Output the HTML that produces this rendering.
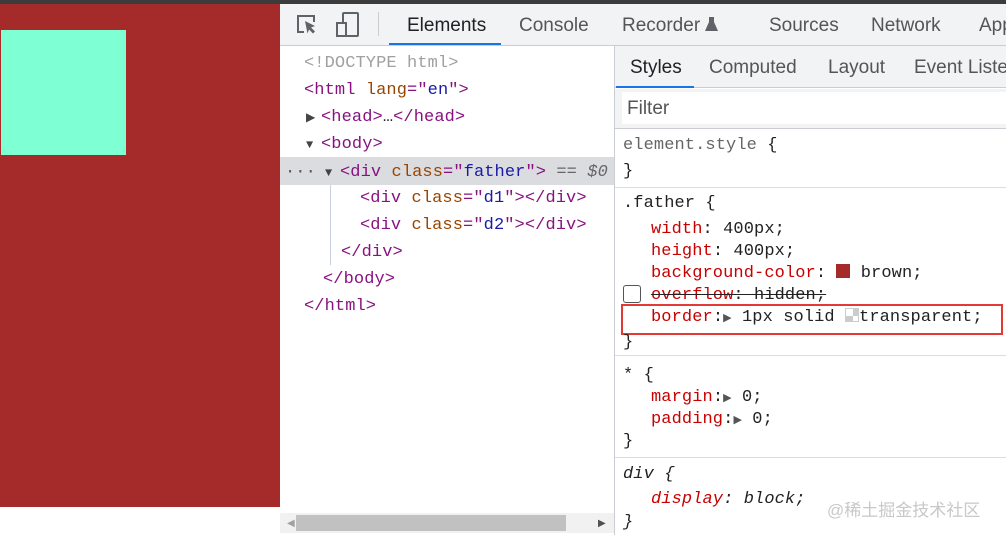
<!DOCTYPE html>
<html><head><style>
*{margin:0;padding:0;box-sizing:border-box}
body{width:1006px;height:535px;overflow:hidden;background:#fff;position:relative;font-family:"Liberation Sans",sans-serif}
.a{position:absolute;white-space:pre}
.m{font-family:"Liberation Mono",monospace;font-size:17px;line-height:22px;color:#222;margin-top:2px;letter-spacing:0.1px}
.t{color:#881280}.n{color:#994500}.v{color:#1a1aa6}.g{color:#a0a0a0}.p{color:#c80000}
.tab{font-size:19px;color:#555;line-height:22px}
.tri{font-size:12px;color:#444;display:inline-block;width:18px}
</style></head><body>
<div class="a" style="left:0;top:0;width:1006px;height:4px;background:#3c3c3c"></div>
<div class="a" style="left:0;top:4px;width:280px;height:503px;background:#a52a2a"></div>
<div class="a" style="left:1px;top:30px;width:125px;height:125px;background:#7fffd4"></div>
<div class="a" style="left:280px;top:4px;width:726px;height:42px;background:#f1f3f4;border-bottom:1px solid #cacdd1"></div>
<svg class="a" style="left:295px;top:12px" width="24" height="26" viewBox="0 0 24 26"><path d="M9 20H3V4h16v6" fill="none" stroke="#5f6368" stroke-width="2"/><path d="M10 9l10 5-4 1.5 4 4-2 2-4-4-1.5 4z" fill="#5f6368"/></svg>
<svg class="a" style="left:335px;top:11px" width="26" height="28" viewBox="0 0 26 28"><rect x="8" y="2" width="15" height="23" rx="1" fill="none" stroke="#5f6368" stroke-width="2"/><rect x="2" y="12" width="9" height="13" fill="#f1f3f4" stroke="#5f6368" stroke-width="2"/></svg>
<div class="a" style="left:378px;top:12px;width:1px;height:24px;background:#ccc"></div>
<div class="a tab" style="left:407px;top:15px;color:#202124">Elements</div>
<div class="a" style="left:389px;top:43px;width:112px;height:2px;background:#1a73e8"></div>
<div class="a tab" style="left:519px;top:15px">Console</div>
<div class="a tab" style="left:622px;top:15px">Recorder</div>
<svg class="a" style="left:704px;top:16px" width="15" height="16" viewBox="0 0 15 16"><path d="M5 1h5v5l4 9H1l4-9z" fill="#5f6368"/></svg>
<div class="a tab" style="left:769px;top:15px">Sources</div>
<div class="a tab" style="left:871px;top:15px">Network</div>
<div class="a tab" style="left:979px;top:15px">App</div>
<div class="a" style="left:280px;top:157px;width:334px;height:28px;background:#dadce0"></div>
<div class="a m" style="left:304px;top:51px"><span class="g">&lt;!DOCTYPE html&gt;</span></div>
<div class="a m" style="left:304px;top:78px"><span class="t">&lt;html </span><span class="n">lang</span><span class="t">="</span><span class="v">en</span><span class="t">"&gt;</span></div>
<div class="a m" style="left:306px;top:105px"><span class="tri">▶</span></div>
<div class="a m" style="left:321px;top:105px"><span class="t">&lt;head&gt;</span>…<span class="t">&lt;/head&gt;</span></div>
<div class="a m" style="left:306px;top:132px"><span class="tri">▼</span></div>
<div class="a m" style="left:321px;top:132px"><span class="t">&lt;body&gt;</span></div>
<div class="a m" style="left:285px;top:160px"><span style="color:#555">···</span></div>
<div class="a m" style="left:325px;top:160px"><span class="tri">▼</span></div>
<div class="a m" style="left:340px;top:160px"><span class="t">&lt;div </span><span class="n">class</span><span class="t">="</span><span class="v">father</span><span class="t">"&gt;</span><span style="color:#666"> == <i>$0</i></span></div>
<div class="a" style="left:330px;top:185px;width:1px;height:80px;background:#c8d0e0"></div>
<div class="a m" style="left:360px;top:186px"><span class="t">&lt;div </span><span class="n">class</span><span class="t">="</span><span class="v">d1</span><span class="t">"&gt;&lt;/div&gt;</span></div>
<div class="a m" style="left:360px;top:213px"><span class="t">&lt;div </span><span class="n">class</span><span class="t">="</span><span class="v">d2</span><span class="t">"&gt;&lt;/div&gt;</span></div>
<div class="a m" style="left:341px;top:240px"><span class="t">&lt;/div&gt;</span></div>
<div class="a m" style="left:323px;top:267px"><span class="t">&lt;/body&gt;</span></div>
<div class="a m" style="left:304px;top:294px"><span class="t">&lt;/html&gt;</span></div>
<div class="a" style="left:280px;top:513px;width:334px;height:20px;background:#f1f1f1"></div>
<div class="a" style="left:296px;top:515px;width:270px;height:16px;background:#c1c1c1"></div>
<div class="a" style="left:287px;top:518px;font-size:10px;color:#a0a0a0">◀</div>
<div class="a" style="left:598px;top:518px;font-size:10px;color:#505050">▶</div>
<div class="a" style="left:614px;top:46px;width:1px;height:489px;background:#cacdd1"></div>
<div class="a" style="left:615px;top:46px;width:391px;height:42px;background:#f1f3f4;border-bottom:1px solid #cacdd1"></div>
<div class="a tab" style="left:630px;top:57px;color:#202124">Styles</div>
<div class="a" style="left:616px;top:86px;width:78px;height:2px;background:#1a73e8"></div>
<div class="a tab" style="left:709px;top:57px">Computed</div>
<div class="a tab" style="left:828px;top:57px">Layout</div>
<div class="a tab" style="left:914px;top:57px">Event Listen</div>
<div class="a" style="left:615px;top:89px;width:391px;height:40px;background:#f1f3f4;border-bottom:1px solid #cacdd1"></div>
<div class="a" style="left:622px;top:92px;width:384px;height:32px;background:#fff"></div>
<div class="a tab" style="left:627px;top:98px;color:#555">Filter</div>
<div class="a m" style="left:623px;top:133px"><span style="color:#666">element.style</span> {</div>
<div class="a m" style="left:623px;top:159px">}</div>
<div class="a" style="left:615px;top:187px;width:391px;height:1px;background:#ddd"></div>
<div class="a m" style="left:623px;top:191px">.father {</div>
<div class="a m" style="left:651px;top:217px"><span class="p">width</span>: 400px;</div>
<div class="a m" style="left:651px;top:239px"><span class="p">height</span>: 400px;</div>
<div class="a m" style="left:651px;top:261px"><span class="p">background-color</span>: <span style="display:inline-block;width:14px;height:14px;background:#a52a2a;vertical-align:-1px"></span> brown;</div>
<div class="a" style="left:623px;top:285px;width:18px;height:18px;border:1.5px solid #555;border-radius:3px"></div>
<div class="a m" style="left:651px;top:283px;text-decoration:line-through"><span class="p">overflow</span>: hidden;</div>
<div class="a m" style="left:651px;top:305px"><span class="p">border</span>:<span style="font-size:11px;color:#555">▶</span> 1px solid <span style="display:inline-block;width:14px;height:14px;background:linear-gradient(#fff,#fff) 0 0/7px 7px no-repeat,linear-gradient(#fff,#fff) 7px 7px/7px 7px no-repeat,#ccc;border:1px solid #ccc;vertical-align:-1px"></span>transparent;</div>
<div class="a" style="left:621px;top:304px;width:382px;height:31px;border:2px solid #e53935"></div>
<div class="a m" style="left:623px;top:330px">}</div>
<div class="a" style="left:615px;top:355px;width:391px;height:1px;background:#ddd"></div>
<div class="a m" style="left:623px;top:363px">* {</div>
<div class="a m" style="left:651px;top:385px"><span class="p">margin</span>:<span style="font-size:11px;color:#555">▶</span> 0;</div>
<div class="a m" style="left:651px;top:407px"><span class="p">padding</span>:<span style="font-size:11px;color:#555">▶</span> 0;</div>
<div class="a m" style="left:623px;top:429px">}</div>
<div class="a" style="left:615px;top:457px;width:391px;height:1px;background:#ddd"></div>
<div class="a m" style="left:623px;top:462px;font-style:italic">div {</div>
<div class="a m" style="left:651px;top:487px;font-style:italic"><span class="p">display</span>: block;</div>
<div class="a m" style="left:623px;top:510px;font-style:italic">}</div>
<div class="a" style="left:827px;top:496px;font-size:17px;color:#c8c8c8;font-family:'Liberation Sans','Noto Sans CJK SC',sans-serif">@稀土掘金技术社区</div>
</body></html>
